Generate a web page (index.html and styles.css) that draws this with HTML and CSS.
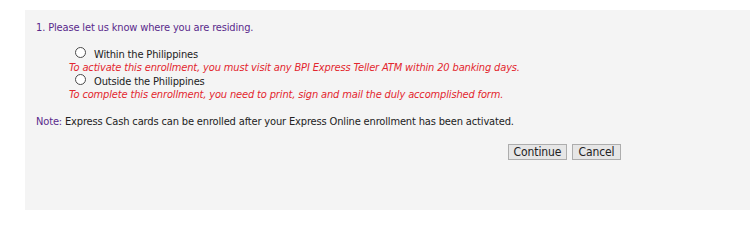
FILE: index.html
```html
<!DOCTYPE html>
<html>
<head>
<meta charset="utf-8">
<link rel="stylesheet" href="styles.css">
</head>
<body>
<div class="panel">
  <p class="question">1. Please let us know where you are residing.</p>
  <div class="options">
    <label class="option"><span class="radio"></span><span class="label-text">Within the Philippines</span></label>
    <p class="hint">To activate this enrollment, you must visit any BPI Express Teller ATM within 20 banking days.</p>
    <label class="option"><span class="radio"></span><span class="label-text">Outside the Philippines</span></label>
    <p class="hint">To complete this enrollment, you need to print, sign and mail the duly accomplished form.</p>
  </div>
  <p class="note"><span class="note-label">Note:</span> Express Cash cards can be enrolled after your Express Online enrollment has been activated.</p>
  <div class="actions">
    <button class="btn btn-continue">Continue</button>
    <button class="btn btn-cancel">Cancel</button>
  </div>
</div>
</body>
</html>
```

FILE: styles.css
```css
html, body {
  margin: 0;
  padding: 0;
  background: #ffffff;
}
body {
  padding: 10px 0 0 25px;
  font-family: "DejaVu Sans Condensed", "DejaVu Sans", sans-serif;
  font-size: 11px;
  letter-spacing: -0.15px;
  color: #222222;
}
.panel {
  background: #f4f4f4;
  height: 200px;
  box-sizing: border-box;
  padding: 11px 0 0 11px;
}
.question {
  margin: 0;
  color: #5a2a8c;
  line-height: 13px;
}
.options {
  padding: 13px 0 0 33px;
  display: flex;
  flex-direction: column;
}
.option {
  display: flex;
  align-items: center;
  padding-left: 6px;
  height: 14px;
}
.radio {
  width: 11px;
  height: 11px;
  border: 1px solid #4a4a4a;
  border-radius: 50%;
  background: #ffffff;
  box-sizing: border-box;
  margin-right: 8px;
  margin-bottom: 3px;
}
.label-text {
  color: #222222;
}
.hint {
  margin: 0;
  color: #e3262e;
  font-style: italic;
  line-height: 13px;
}
.note {
  margin: 14px 0 0 0;
  line-height: 13px;
}
.note-label {
  color: #5a2a8c;
}
.actions {
  display: flex;
  gap: 5px;
  padding-left: 472px;
  margin-top: 16px;
}
.btn {
  font-family: "DejaVu Sans Condensed", "DejaVu Sans", sans-serif;
  font-size: 12px;
  letter-spacing: -0.1px;
  color: #222222;
  background: #e6e6e6;
  border: 1px solid #adadad;
  border-radius: 0;
  height: 16px;
  padding: 0;
  margin: 0;
  line-height: 14px;
  text-align: center;
}
.btn-continue {
  width: 59px;
}
.btn-cancel {
  width: 49px;
}
```
